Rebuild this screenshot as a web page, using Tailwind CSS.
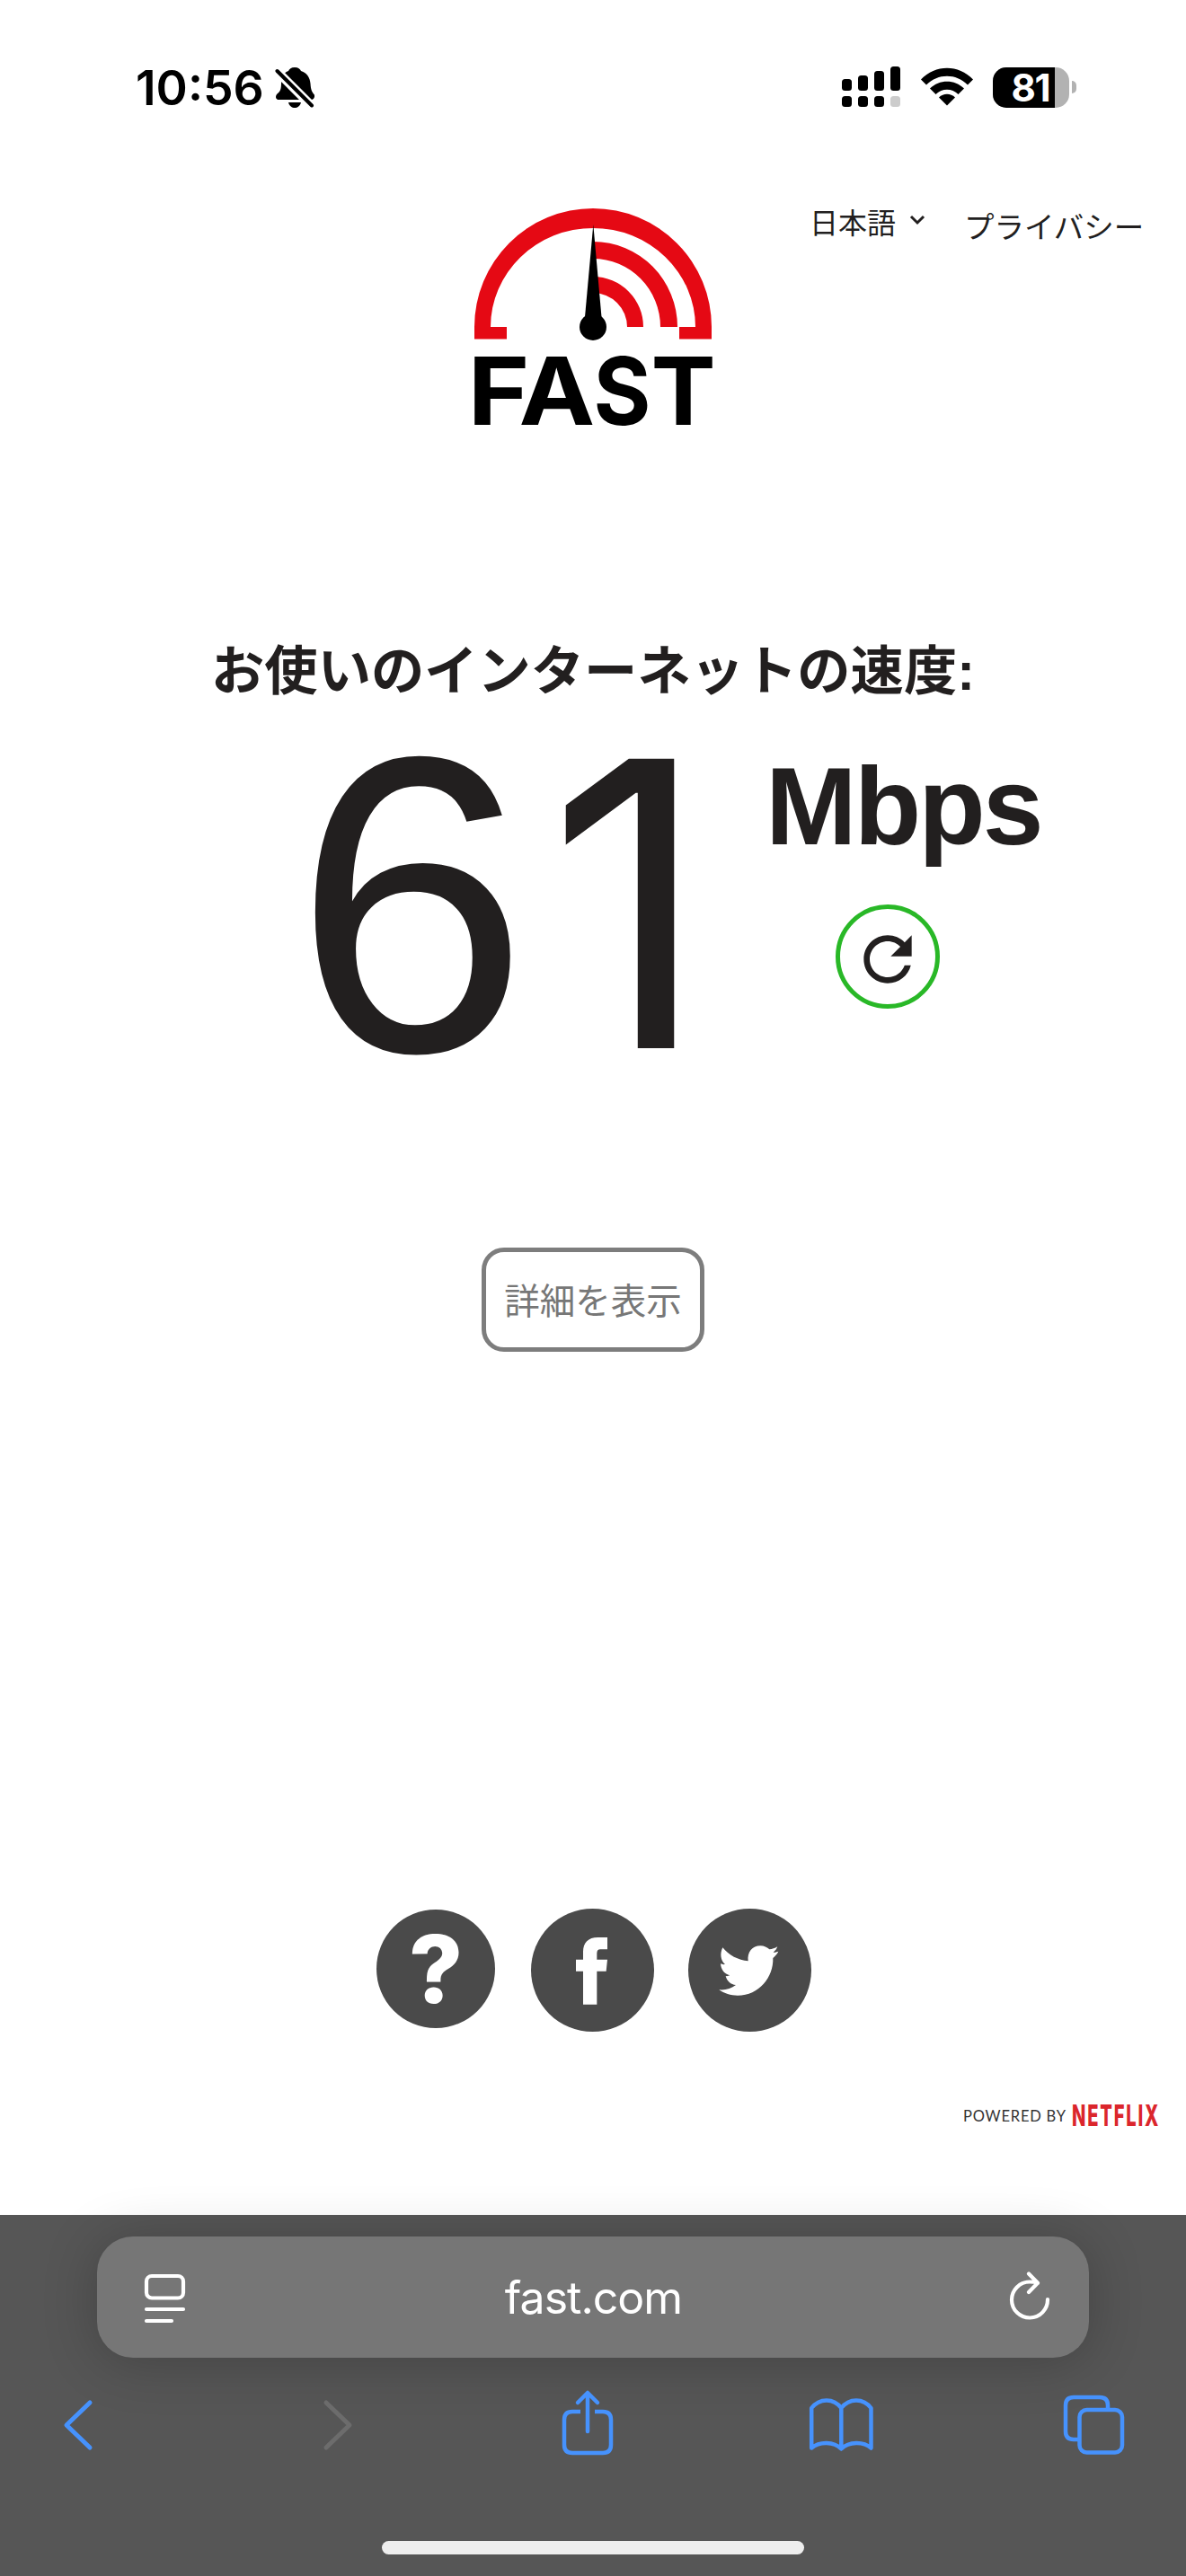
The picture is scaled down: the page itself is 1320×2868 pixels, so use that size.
<!DOCTYPE html>
<html lang="ja">
  <head>
    <meta charset="UTF-8" />
    <meta name="viewport" content="width=device-width, initial-scale=1.0" />
    <title>FAST.com</title>
    <script src="https://cdn.jsdelivr.net/npm/@tailwindcss/browser@4"></script>
  </head>
  <body
    class="flex h-[2868px] w-[1320px] flex-col overflow-hidden bg-white font-['Liberation_Sans','Noto_Sans_CJK_JP',sans-serif] text-[#221f1f]"
  >
    <!-- Status bar -->
    <header
      class="flex h-[196px] items-start justify-between pl-[151px] pr-[122px] pt-[70px] font-['Inter',sans-serif] text-black"
    >
      <div class="flex h-[54px] items-center">
        <span class="w-[155px] pt-[2px] text-[53.500px] leading-[54px] font-semibold">10:56</span>
        <svg class="h-[48px] w-[44px]" viewBox="0 0 44 48">
          <path
            d="M22 2c4 0 6 2 7 4 7 2 10 8 10.500 14 .5 7 1.500 9 4 12 1.500 2 0 6-3 6H5c-4 0-5-3-3-6 4-3 5-6 5-12C7.500 11 10 8 15 6c1-2 3-4 7-4z"
          />
          <path d="M15 41h14c-1 4-4 6-7 6s-6-2-7-6z" />
          <path d="M1 5L42 46" stroke="#fff" stroke-width="10" />
          <path d="M2.500 6L41 44.500" stroke="#000" stroke-width="4" stroke-linecap="round" />
        </svg>
      </div>
      <div class="flex h-[54px] items-center">
        <svg class="h-[46px] w-[66px]" viewBox="0 0 66 46">
          <rect x="0" y="14" width="11" height="13" rx="3.500" />
          <rect x="18" y="10" width="11" height="17" rx="3.500" />
          <rect x="36" y="5" width="11" height="22" rx="3.500" />
          <rect x="54" y="0" width="11" height="27" rx="3.500" />
          <rect x="0" y="33" width="11" height="12" rx="3.500" />
          <rect x="18" y="33" width="11" height="12" rx="3.500" />
          <rect x="36" y="33" width="11" height="12" rx="3.500" />
          <rect x="54" y="33" width="11" height="12" rx="3.500" fill="#ccc" />
        </svg>
        <svg class="ml-[22px] h-[44px] w-[58px]" viewBox="0 0 58 44">
          <path d="M0 13.500C16-3.500 42-3.500 58 13.500L52 19.500C39 6.500 19 6.500 6 19.500z" />
          <path d="M10 23.500C20.500 13 37.500 13 48 23.500L41.500 30C34.500 23 23.500 23 16.500 30z" />
          <path d="M20 33.500C25 28.500 33 28.500 38 33.500L29 42.500z" />
        </svg>
        <div class="ml-[22px] h-[45px] w-[85px] rounded-[15px] bg-[#b2b2b2]">
          <div class="h-full w-[69px] rounded-l-[15px] bg-black pr-[6px] text-right text-[42px] leading-[45px] font-bold tracking-[-1.500px] text-white">81</div>
        </div>
        <div class="ml-[3px] h-[14px] w-[5px] rounded-r-full bg-[#b2b2b2]"></div>
      </div>
    </header>

    <!-- Logo and links -->
    <section class="grid h-[494px] grid-cols-[528px_264px_528px]">
      <div></div>
      <svg class="mt-[36px] h-[244px] w-[264px] overflow-visible" viewBox="0 0 264 244">
        <g fill="#e50914">
          <path d="M0 145.500V132A132 132 0 0 1 264 132V145.500H228V132H246A114 110 0 0 0 18 132H36V145.500z" />
          <path d="M132 37A94 95 0 0 1 226 132H207A75 76 0 0 0 132 56z" />
          <path d="M132 76A56 56 0 0 1 188 132H170A38 38 0 0 0 132 94z" />
        </g>
        <path d="M132.300 18L141.500 121V132H123V121z" />
        <circle cx="132" cy="132" r="15" />
        <g class="font-['Inter',sans-serif] text-[105px] font-bold">
          <text transform="translate(-7.500 240.500) scale(1.12 1)">F</text>
          <text transform="translate(49.500 240.500) scale(1.08 1)">A</text>
          <text transform="translate(132.500 240.500) scale(.93 1)">S</text>
          <text transform="translate(196.500 240.500) scale(1.03 1)">T</text>
        </g>
      </svg>
      <nav class="flex items-start pl-[109px] font-['Noto_Sans_CJK_JP',sans-serif]">
        <a class="pt-[26px] text-[32px] leading-[48px]">日本語</a>
        <svg class="mt-[42px] ml-[14px] h-[14px] w-[20px]" viewBox="0 0 20 14" fill="none" stroke="currentColor" stroke-width="3">
          <path d="M3 3l7 7 7-7" />
        </svg>
        <a class="pt-[31px] pl-[42px] text-[33.500px] leading-[48px]">プライバシー</a>
      </nav>
    </section>

    <!-- Speed result -->
    <main class="flex h-[1410px] flex-col items-center">
      <h1 class="h-[110px] pt-[15px] text-[59.300px] leading-[86px] font-bold whitespace-nowrap">お使いのインターネットの速度:</h1>
      <div class="flex h-[589px] w-full pl-[327px]">
        <div class="flex w-[525px]">
          <span class="w-[282px] text-[470px] leading-[416px]">6</span>
          <span class="font-['Inter',sans-serif] text-[443px] leading-[412px]">1</span>
        </div>
        <div class="flex w-[310px] flex-col">
          <div class="pt-[30px] text-[122px] leading-[136px] font-bold tracking-[-3px]">Mbps</div>
          <button class="mt-[41px] ml-[78px] flex size-[116px] items-center justify-center rounded-full border-[5px] border-[#29b827]">
            <svg class="mt-[5px] size-[80px]" viewBox="0 0 24 24" fill="currentColor">
              <path
                d="M17.650 6.350C16.200 4.900 14.210 4 12 4c-4.420 0-7.990 3.580-7.990 8s3.570 8 7.990 8c3.730 0 6.840-2.550 7.730-6h-2.080c-.820 2.330-3.040 4-5.650 4-3.310 0-6-2.690-6-6s2.690-6 6-6c1.660 0 3.140.690 4.220 1.780L13 11h7V4l-2.350 2.350z"
              />
            </svg>
          </button>
        </div>
      </div>
      <button
        class="flex h-[116px] w-[248px] items-center justify-center rounded-[25px] border-[5px] border-[#7d7d7d] pb-[3px] font-['Noto_Sans_CJK_JP',sans-serif] text-[39.500px] whitespace-nowrap text-[#777]"
      >
        詳細を表示
      </button>
    </main>

    <!-- Help and social links -->
    <footer class="flex h-[366px] flex-col">
      <div class="flex h-[188px] items-start pt-[25px] pl-[419px]">
        <a class="mt-[1px] flex size-[132px] items-center justify-center rounded-full bg-[#4a4a4a] font-['Inter',sans-serif] text-[104px] font-extrabold text-white">?</a>
        <svg class="ml-[40px] size-[137px]" viewBox="573 76 411 411">
          <circle cx="778.500" cy="281.500" r="205.500" fill="#4a4a4a" />
          <path
            d="M828 172H796C764 172 747 190 747 220V246H723V285H747V396H793V285H824L828 246H793V225C793 216 797 212 804 212H828z"
            fill="#fff"
          />
        </svg>
        <svg class="ml-[38px] size-[137px]" viewBox="1098 76 411 411">
          <circle cx="1303.500" cy="281.500" r="205.500" fill="#4a4a4a" />
          <path
            d="M1213 206C1233 232 1265 248 1298 251C1294 222 1312 200 1339 200C1351 200 1362 205 1369 212C1378 211 1387 208 1396 203C1393 211 1389 216 1382 222C1388 222 1394 220 1399 219C1394 228 1388 235 1381 241C1383 305 1335 366 1263 366C1240 366 1218 359 1201 347C1222 349 1242 343 1257 331C1241 330 1227 318 1223 301C1228 302 1232 301 1237 299C1219 295 1207 279 1206 260C1211 262 1217 263 1221 262C1206 250 1203 226 1213 206z"
            fill="#fff"
          />
        </svg>
      </div>
      <div class="flex justify-end pt-[46px] pr-[30px]">
        <svg class="h-[40px] w-[218px] overflow-visible" viewBox="0 0 218 40">
          <text x="0" y="27.500" textLength="114" class="font-['Lato',sans-serif] text-[16.500px]" fill="#333">POWERED BY</text>
          <text
            transform="translate(121 33) scale(.61 1)"
            textLength="158"
            class="font-['Inter',sans-serif] text-[33px] font-extrabold"
            fill="#db262c"
          >NETFLIX</text>
        </svg>
      </div>
    </footer>

    <!-- Browser toolbar -->
    <div class="flex h-[402px] flex-col items-center bg-[#565656] pt-[24px]">
      <div
        class="flex h-[135px] w-[1104px] items-center justify-between rounded-[40px] bg-[#767676] pr-[42px] pl-[50px] text-white shadow-[0_4px_60px_rgba(0,0,0,0.22)]"
      >
        <svg class="h-[60px] w-[50px]" viewBox="0 0 50 60" fill="none" stroke="currentColor" stroke-width="4.200" stroke-linecap="round">
          <rect x="5" y="6" width="41" height="24.500" rx="6" />
          <path d="M5 43H46M5 56H33" />
        </svg>
        <span class="mr-[7px] font-['Inter',sans-serif] text-[50px] leading-none tracking-[-1px]">fast.com</span>
        <svg class="h-[60px] w-[50px]" viewBox="0 0 50 60" fill="none" stroke="currentColor" stroke-width="4.200" stroke-linecap="round" stroke-linejoin="round">
          <path d="M46 32A20 20 0 1 1 26 12.500Q31 12.500 35 13.800M25 3.500L35 13.800L25 24" />
        </svg>
      </div>
      <div class="flex h-[204px] w-full items-start pt-[34px] pl-[69px] text-[#4692fd]">
        <svg class="mt-[10px] h-[62px] w-[36px]" viewBox="0 0 36 62" fill="none" stroke="currentColor" stroke-width="5" stroke-linecap="round" stroke-linejoin="round">
          <path d="M31 6L5 31L31 56" />
        </svg>
        <svg class="mt-[10px] ml-[253px] h-[62px] w-[36px] text-[#6c6c6c]" viewBox="0 0 36 62" fill="none" stroke="currentColor" stroke-width="5" stroke-linecap="round" stroke-linejoin="round">
          <path d="M5 6L31 31L5 56" />
        </svg>
        <svg class="ml-[230px] h-[80px] w-[60px]" viewBox="0 0 60 80" fill="none" stroke="currentColor" stroke-width="4.500" stroke-linecap="round" stroke-linejoin="round">
          <path d="M22 26H13Q4 26 4 35V63Q4 72 13 72H47Q56 72 56 63V35Q56 26 47 26H38" stroke-linecap="butt" />
          <path d="M30 6V48M19 16L30 5L41 16" />
        </svg>
        <svg class="ml-[215px] h-[80px] w-[74px]" viewBox="0 0 74 80" fill="none" stroke="currentColor" stroke-width="4.500" stroke-linejoin="round">
          <path d="M37.300 22C29 10.500 13 10.500 4.200 22V66.500C13 59 29 59 37.300 67.500C46 59 62 59 70.500 66.500V22C62 10.500 46 10.500 37.300 22zM37.300 22V67" />
        </svg>
        <svg class="ml-[208px] h-[80px] w-[72px]" viewBox="0 0 72 80" fill="none" stroke="currentColor" stroke-width="4.500">
          <path d="M20 57H14Q5 57 5 48V19Q5 10 14 10H43Q52 10 52 19V24" />
          <rect x="20.500" y="24" width="47.500" height="47.500" rx="8" />
        </svg>
      </div>
      <div class="h-[15px] w-[470px] rounded-full bg-[#eee]"></div>
    </div>
  </body>
</html>
